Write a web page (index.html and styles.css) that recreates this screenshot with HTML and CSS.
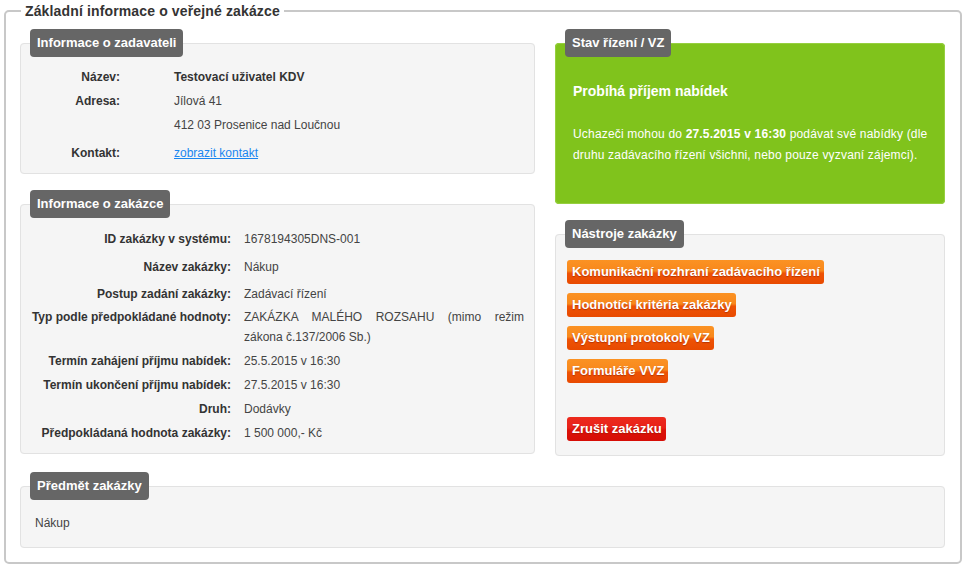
FILE: index.html
```html
<!DOCTYPE html>
<html lang="cs">
<head>
<meta charset="utf-8">
<title>Základní informace o veřejné zakázce</title>
<link rel="stylesheet" href="styles.css">
</head>
<body>
<fieldset class="outer">
  <legend class="outer-legend">Základní informace o veřejné zakázce</legend>
  <div class="layout">
    <div class="col">
      <fieldset class="panel panel-zadavatel">
        <legend class="tab">Informace o zadavateli</legend>
        <div class="rows rows-narrow">
          <div class="row"><div class="lbl">Název:</div><div class="val strong">Testovací uživatel KDV</div></div>
          <div class="row"><div class="lbl">Adresa:</div><div class="val">Jílová 41</div></div>
          <div class="row"><div class="lbl"></div><div class="val">412 03 Prosenice nad Loučnou</div></div>
          <div class="row row-contact"><div class="lbl">Kontakt:</div><div class="val"><a href="#" class="link">zobrazit kontakt</a></div></div>
        </div>
      </fieldset>
      <fieldset class="panel panel-zakazka">
        <legend class="tab">Informace o zakázce</legend>
        <div class="rows rows-wide">
          <div class="row row-loose"><div class="lbl">ID zakázky v systému:</div><div class="val">1678194305DNS-001</div></div>
          <div class="row row-loose"><div class="lbl">Název zakázky:</div><div class="val">Nákup</div></div>
          <div class="row row-mid"><div class="lbl">Postup zadání zakázky:</div><div class="val">Zadávací řízení</div></div>
          <div class="row"><div class="lbl">Typ podle předpokládané hodnoty:</div><div class="val justify">ZAKÁZKA MALÉHO ROZSAHU (mimo režim zákona č.137/2006 Sb.)</div></div>
          <div class="row"><div class="lbl">Termín zahájení příjmu nabídek:</div><div class="val">25.5.2015 v 16:30</div></div>
          <div class="row"><div class="lbl">Termín ukončení příjmu nabídek:</div><div class="val">27.5.2015 v 16:30</div></div>
          <div class="row"><div class="lbl">Druh:</div><div class="val">Dodávky</div></div>
          <div class="row"><div class="lbl">Předpokládaná hodnota zakázky:</div><div class="val">1 500 000,- Kč</div></div>
        </div>
      </fieldset>
    </div>
    <div class="col">
      <fieldset class="panel panel-stav">
        <legend class="tab">Stav řízení / VZ</legend>
        <div class="stav-body">
          <h2 class="stav-title">Probíhá příjem nabídek</h2>
          <p class="stav-text">Uchazeči mohou do <b>27.5.2015 v 16:30</b> podávat své nabídky (dle druhu zadávacího řízení všichni, nebo pouze vyzvaní zájemci).</p>
        </div>
      </fieldset>
      <fieldset class="panel panel-tools">
        <legend class="tab">Nástroje zakázky</legend>
        <div class="tools">
          <a href="#" class="btn btn-orange">Komunikační rozhraní zadávacího řízení</a>
          <a href="#" class="btn btn-orange">Hodnotící kritéria zakázky</a>
          <a href="#" class="btn btn-orange">Výstupní protokoly VZ</a>
          <a href="#" class="btn btn-orange">Formuláře VVZ</a>
          <a href="#" class="btn btn-red btn-cancel">Zrušit zakázku</a>
        </div>
      </fieldset>
    </div>
  </div>
  <fieldset class="panel panel-predmet">
    <legend class="tab">Předmět zakázky</legend>
    <div class="predmet-text">Nákup</div>
  </fieldset>
</fieldset>
</body>
</html>
```
FILE: styles.css
```css
html, body {
  margin: 0;
  padding: 0;
  background: #ffffff;
}
body {
  padding: 0 3px 0 4px;
  font-family: "Liberation Sans", Arial, sans-serif;
  font-size: 12px;
  color: #444;
}
.outer {
  margin: 0;
  border: 2px solid #c8c8c8;
  border-radius: 5px;
  padding: 7px 15px 14px 14px;
  min-width: 0;
}
.outer-legend {
  margin-left: 1px;
  padding: 0 4px;
  font-size: 14px;
  font-weight: bold;
  line-height: 22px;
  letter-spacing: 0.14px;
  color: #333;
}
.layout {
  display: grid;
  grid-template-columns: 515fr 390fr;
  column-gap: 20px;
  margin-bottom: 16px;
}
.col {
  display: flex;
  flex-direction: column;
  gap: 16px;
  min-width: 0;
}
.panel {
  margin: 0;
  border: 1px solid #e2e2e2;
  border-radius: 4px;
  background: #f5f5f5;
  padding: 0;
  min-width: 0;
}
.tab {
  margin-left: 9px;
  padding: 0 7px;
  background: #666;
  color: #fff;
  font-weight: bold;
  font-size: 13px;
  line-height: 28px;
  border-radius: 4px;
}
.rows {
  display: flex;
  flex-direction: column;
}
.row {
  display: grid;
  line-height: 20px;
  padding: 2px 0;
}
.rows-narrow {
  padding: 8px 10px 8px 0;
}
.rows-narrow .row {
  grid-template-columns: 99px 1fr;
  column-gap: 54px;
}
.rows-narrow .row-contact {
  padding-top: 6px;
}
.rows-wide {
  padding: 7px 10px 8px 0;
}
.rows-wide .row {
  grid-template-columns: 210px 1fr;
  column-gap: 13px;
}
.rows-wide .row-loose {
  padding: 4px 0;
}
.rows-wide .row-mid {
  padding: 3px 0 1px;
}
.lbl {
  text-align: right;
  font-weight: bold;
  color: #333;
}
.val {
  color: #444;
}
.val.strong {
  font-weight: bold;
  color: #333;
}
.justify {
  text-align: justify;
}
.link {
  color: #1a86f0;
  text-decoration: underline;
}
.panel-stav {
  background: #80c31c;
  border-color: #96cf3f;
  color: #fff;
}
.stav-body {
  padding: 24px 14px 37px 17px;
}
.stav-title {
  margin: 0;
  font-size: 14px;
  line-height: 20px;
  font-weight: bold;
  color: #fff;
}
.stav-text {
  margin: 23px 0 0;
  font-size: 12px;
  line-height: 21px;
  letter-spacing: 0.18px;
  color: #fff;
}
.stav-text b {
  font-weight: bold;
}
.tools {
  display: flex;
  flex-direction: column;
  align-items: flex-start;
  gap: 9px;
  padding: 12px 11px 14px;
}
.btn {
  display: inline-block;
  padding: 0 4px 0 5px;
  font-weight: bold;
  font-size: 13px;
  line-height: 24px;
  color: #fff;
  text-decoration: none;
  border-radius: 3px;
  text-shadow: 0 1px 1px rgba(140, 30, 0, 0.55);
}
.btn-orange {
  background: linear-gradient(to bottom, #fb9223 0%, #f8881c 45%, #ee5305 55%, #e84a00 100%);
}
.btn-red {
  background: linear-gradient(to bottom, #ec2a1c 0%, #e8221a 45%, #dc1208 55%, #d60d06 100%);
}
.btn-cancel {
  margin-top: 25px;
}
.panel-predmet {
  padding: 0;
}
.predmet-text {
  padding: 13px 14px 14px;
  line-height: 20px;
  color: #444;
}
```
